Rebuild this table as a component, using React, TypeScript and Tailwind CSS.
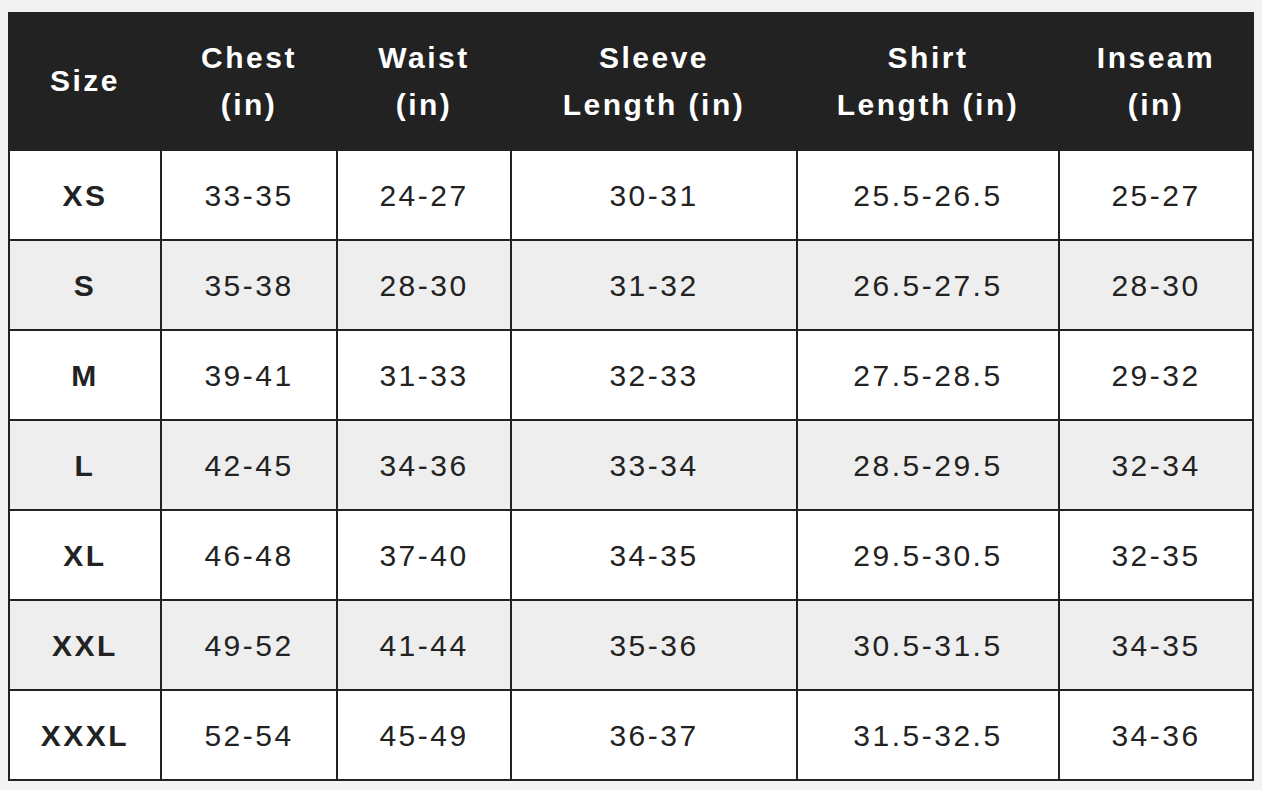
const headers = [
  ["Size"],
  ["Chest", "(in)"],
  ["Waist", "(in)"],
  ["Sleeve", "Length (in)"],
  ["Shirt", "Length (in)"],
  ["Inseam", "(in)"],
];

const rows = [
  ["XS", "33-35", "24-27", "30-31", "25.5-26.5", "25-27"],
  ["S", "35-38", "28-30", "31-32", "26.5-27.5", "28-30"],
  ["M", "39-41", "31-33", "32-33", "27.5-28.5", "29-32"],
  ["L", "42-45", "34-36", "33-34", "28.5-29.5", "32-34"],
  ["XL", "46-48", "37-40", "34-35", "29.5-30.5", "32-35"],
  ["XXL", "49-52", "41-44", "35-36", "30.5-31.5", "34-35"],
  ["XXXL", "52-54", "45-49", "36-37", "31.5-32.5", "34-36"],
];

export default function App() {
  return (
    <div className="min-h-[790px] w-full bg-[#f2f2f2] pl-[8px] pt-[12px] font-['Liberation_Sans',Arial,sans-serif]">
      <div className="grid w-[1246px] grid-cols-[150px_174px_172px_284px_260px_192px] grid-rows-[137px_repeat(7,88px)] gap-[2px] bg-[#222222] px-[2px] pb-[2px] text-[30px] tracking-[2.5px]">
        {headers.map((lines, i) => (
          <div
            key={i}
            className="flex flex-col items-center justify-center bg-[#222222] text-center font-bold leading-[47px] text-white"
          >
            {lines.map((line) => (
              <span key={line}>{line}</span>
            ))}
          </div>
        ))}
        {rows.map((row, r) =>
          row.map((cell, c) => (
            <div
              key={`${r}-${c}`}
              className={`flex items-center justify-center text-[#222222] ${
                r % 2 === 1 ? "bg-[#eeeeee]" : "bg-white"
              } ${c === 0 ? "font-bold" : ""}`}
            >
              {cell}
            </div>
          ))
        )}
      </div>
    </div>
  );
}
